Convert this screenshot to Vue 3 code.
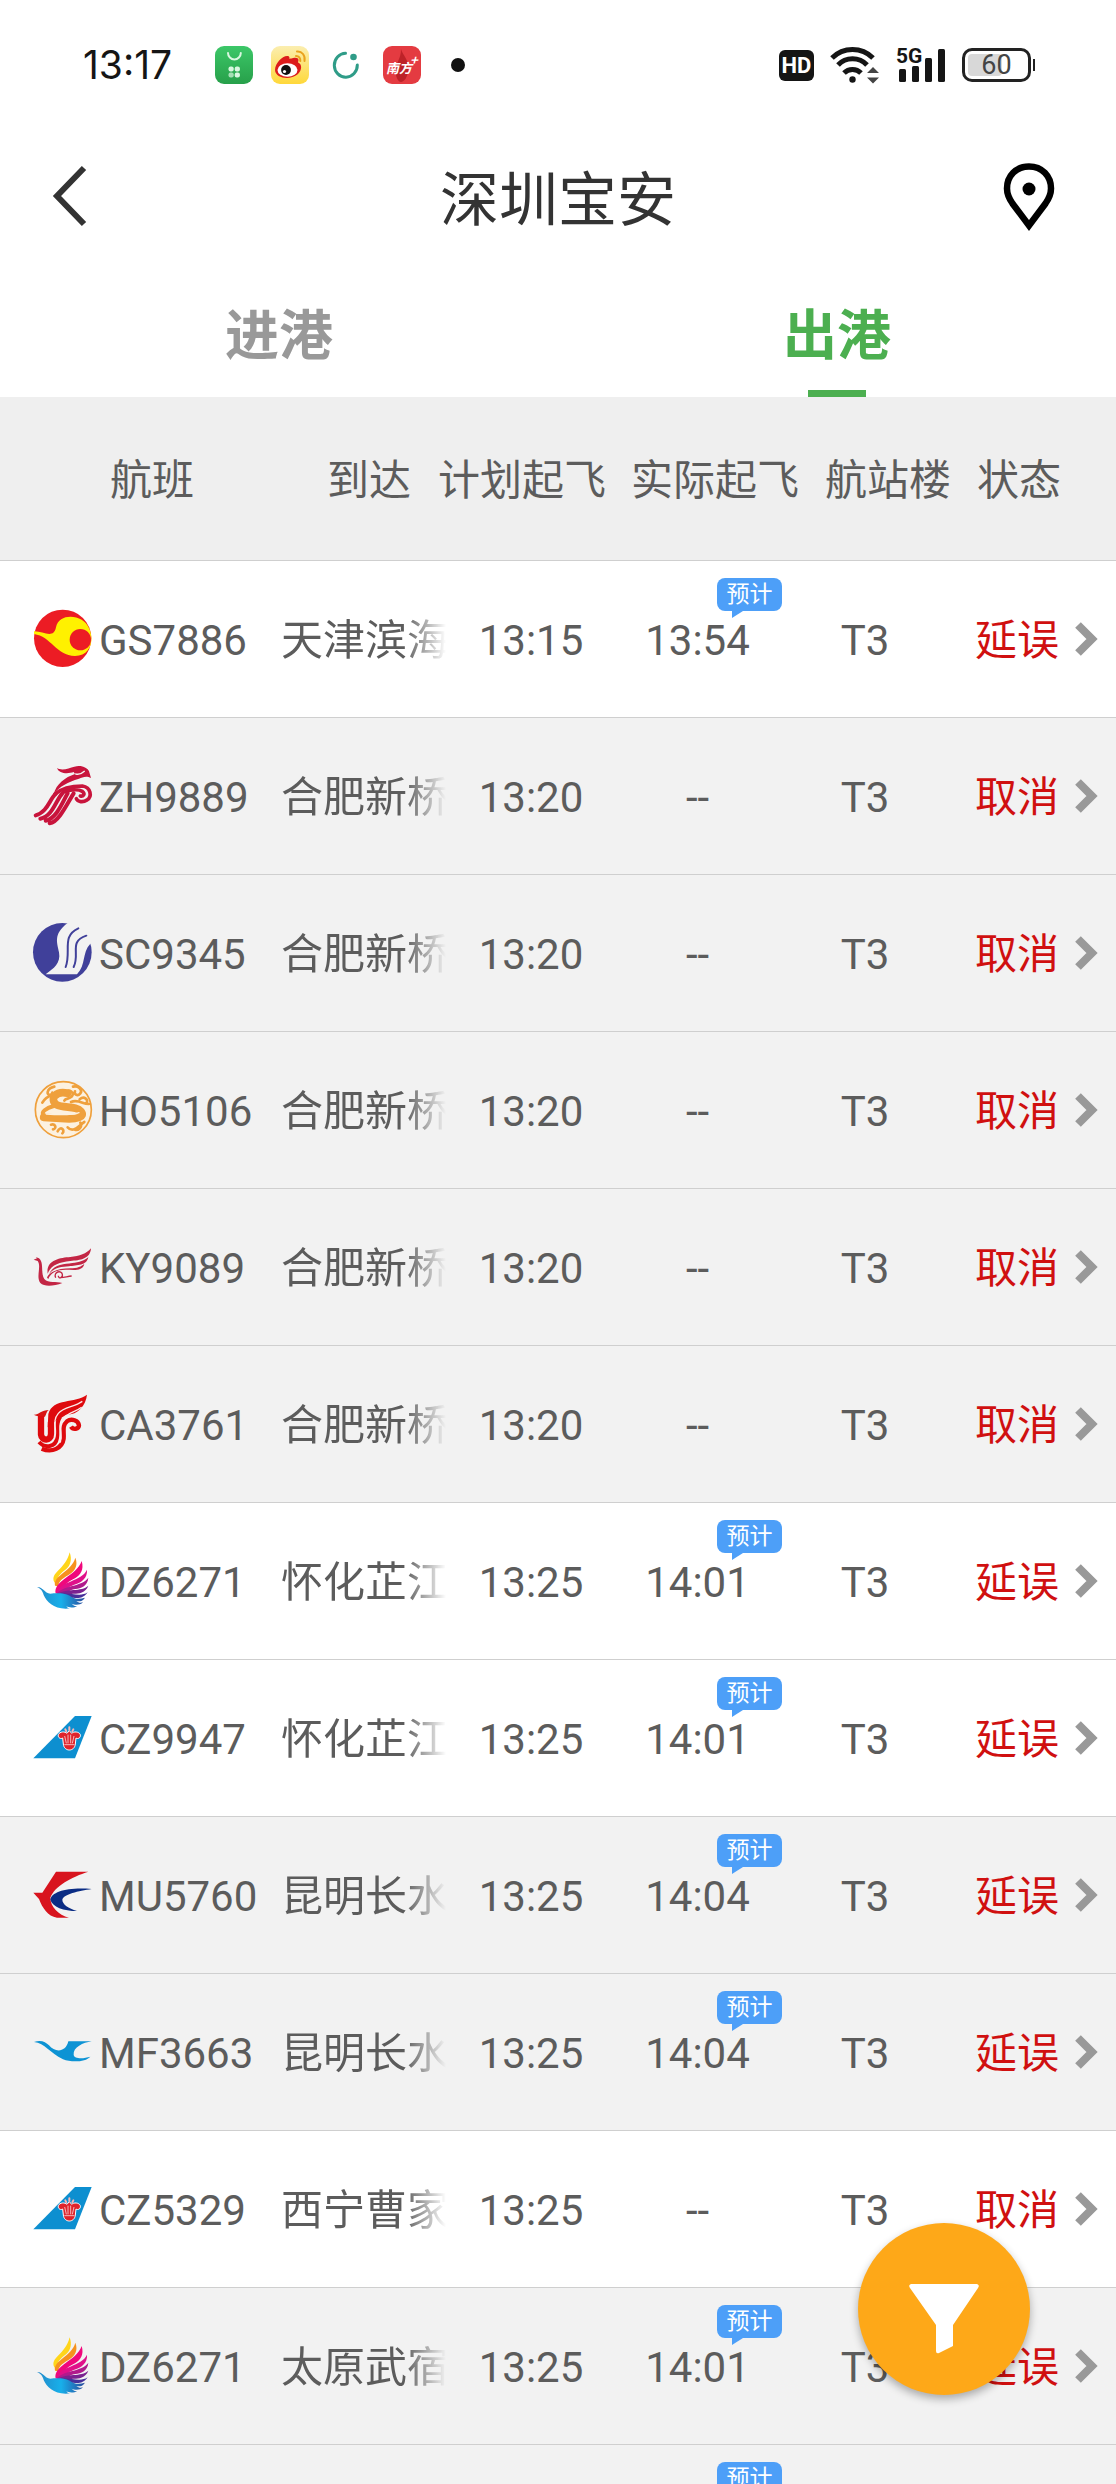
<script setup>
import { ref } from 'vue'

const tabs = ['进港', '出港']
const activeTab = ref('出港')
const columns = ['航班', '到达', '计划起飞', '实际起飞', '航站楼', '状态']

const flights = [
  { logo: 'tianjin', no: 'GS7886', city: '天津滨海', plan: '13:15', actual: '13:54', terminal: 'T3', status: '延误', estimated: true, shaded: false },
  { logo: 'shenzhen', no: 'ZH9889', city: '合肥新桥', plan: '13:20', actual: '--', terminal: 'T3', status: '取消', estimated: false, shaded: true },
  { logo: 'shandong', no: 'SC9345', city: '合肥新桥', plan: '13:20', actual: '--', terminal: 'T3', status: '取消', estimated: false, shaded: true },
  { logo: 'juneyao', no: 'HO5106', city: '合肥新桥', plan: '13:20', actual: '--', terminal: 'T3', status: '取消', estimated: false, shaded: true },
  { logo: 'kunming', no: 'KY9089', city: '合肥新桥', plan: '13:20', actual: '--', terminal: 'T3', status: '取消', estimated: false, shaded: true },
  { logo: 'airchina', no: 'CA3761', city: '合肥新桥', plan: '13:20', actual: '--', terminal: 'T3', status: '取消', estimated: false, shaded: true },
  { logo: 'donghai', no: 'DZ6271', city: '怀化芷江', plan: '13:25', actual: '14:01', terminal: 'T3', status: '延误', estimated: true, shaded: false },
  { logo: 'southern', no: 'CZ9947', city: '怀化芷江', plan: '13:25', actual: '14:01', terminal: 'T3', status: '延误', estimated: true, shaded: false },
  { logo: 'eastern', no: 'MU5760', city: '昆明长水', plan: '13:25', actual: '14:04', terminal: 'T3', status: '延误', estimated: true, shaded: true },
  { logo: 'xiamen', no: 'MF3663', city: '昆明长水', plan: '13:25', actual: '14:04', terminal: 'T3', status: '延误', estimated: true, shaded: true },
  { logo: 'southern', no: 'CZ5329', city: '西宁曹家', plan: '13:25', actual: '--', terminal: 'T3', status: '取消', estimated: false, shaded: false },
  { logo: 'donghai', no: 'DZ6271', city: '太原武宿', plan: '13:25', actual: '14:01', terminal: 'T3', status: '延误', estimated: true, shaded: true },
  { logo: '', no: '', city: '', plan: '', actual: '', terminal: '', status: '', estimated: true, shaded: true }
]
</script>

<template>
  <div class="screen">
    <header class="top">
      <div class="statusbar">
        <div class="side left">
          <span class="clock">13:17</span>
          <svg class="app" viewBox="0 0 38 38">
            <defs>
              <linearGradient id="market" x1="0" y1="0" x2="0" y2="1">
                <stop offset="0" stop-color="#3cc768" />
                <stop offset="1" stop-color="#27a04a" />
              </linearGradient>
            </defs>
            <rect width="38" height="38" rx="9" fill="url(#market)" />
            <path d="M13 7a6.400 6.400 0 0 0 12.800 0" fill="none" stroke="#d9f7e0" stroke-width="2" stroke-linecap="round" />
            <g fill="#d9f7e0">
              <rect x="13.500" y="20.500" width="5.200" height="5" rx="2" />
              <rect x="19.700" y="20.500" width="5.200" height="5" rx="2" />
              <rect x="13.500" y="26.500" width="5.200" height="5" rx="2" opacity=".7" />
              <rect x="19.700" y="26.500" width="5.200" height="5" rx="2" />
            </g>
          </svg>
          <svg class="app" viewBox="0 0 38 38">
            <defs>
              <linearGradient id="weibo" x1="0" y1="0" x2="0" y2="1">
                <stop offset="0" stop-color="#fbeeb0" />
                <stop offset="1" stop-color="#ffd83a" />
              </linearGradient>
            </defs>
            <rect width="38" height="38" rx="9" fill="url(#weibo)" />
            <path d="M4 24C4 17 12 9 17 10c2 .5 1.500 3 1.500 3s6-2.500 8.500-.5c1 1 0 4 0 4s4 1.500 3 6c-1 6-8 9.500-14 9.500S4 29 4 24z" fill="#dc1c1c" />
            <ellipse cx="16.500" cy="24" rx="10" ry="6.800" fill="#fff" />
            <circle cx="15" cy="24" r="4.900" fill="#111" />
            <circle cx="13.500" cy="25.500" r="1.600" fill="#fff" />
            <path d="M25 10c3 0 4.500 2 4.300 5M26 5.500c5-.5 8.500 4 7.500 9.500" fill="none" stroke="#eaa21e" stroke-width="2" stroke-linecap="round" />
          </svg>
          <svg class="app" viewBox="0 0 38 38">
            <path d="M18.500 7.200A11.500 12 0 1 0 30.300 19" fill="none" stroke="#2f9c88" stroke-width="3" stroke-linecap="round" />
            <circle cx="26.500" cy="11" r="3.300" fill="#2f9c88" />
          </svg>
          <svg class="app" viewBox="0 0 38 38">
            <rect width="38" height="38" rx="9" fill="#e43b41" />
            <path d="M18 3c2 7 8 10 7 21 0 7-4 12-7 12s-6-6-5-12c0-8 5-11 5-21z" fill="#bd2228" />
            <text x="3" y="27" class="press">南方</text>
            <text x="27" y="19" class="press">+</text>
          </svg>
          <span class="dot"></span>
        </div>
        <div class="side right">
          <span class="hd">HD</span>
          <svg class="wifi" viewBox="0 0 50 38">
            <g fill="none" stroke="#151515" stroke-width="5">
              <path d="M2 12a29 29 0 0 1 41 0" />
              <path d="M8 19a20 20 0 0 1 29 0" />
              <path d="M14 27a12 12 0 0 1 17 0" />
            </g>
            <circle cx="22.500" cy="33.500" r="3.200" fill="#151515" />
            <path d="M37 27l6-6 6 6zM37 31.500h12l-6 6z" fill="#444" />
          </svg>
          <svg class="signal" viewBox="0 0 50 38">
            <text x="0" y="17" class="five">5G</text>
            <g fill="#151515">
              <rect x="3" y="23" width="7" height="13" rx="1.500" />
              <rect x="16" y="20" width="7" height="16" rx="1.500" />
              <rect x="29" y="12" width="7" height="24" rx="1.500" />
              <rect x="42" y="3" width="7" height="33" rx="1.500" />
            </g>
          </svg>
          <span class="battery"><i class="charge"></i><b class="level">60</b></span>
        </div>
      </div>

      <div class="navbar">
        <button class="icon-btn" aria-label="返回">
          <svg width="40" height="64" viewBox="0 0 40 64">
            <path d="M36 4L9 32l27 28" fill="none" stroke="#333" stroke-width="6" />
          </svg>
        </button>
        <h1 class="title">深圳宝安</h1>
        <button class="icon-btn locate" aria-label="位置">
          <svg width="54" height="70" viewBox="0 0 54 70">
            <path d="M27 5.500C14 5.500 5 15 5 27.500c0 6 2 10 5.500 15L27 64.500l16.500-22C47 37.500 49 33.500 49 27.500 49 15 40 5.500 27 5.500z" fill="none" stroke="#000" stroke-width="6.500" />
            <circle cx="27" cy="28" r="6.500" fill="#000" />
          </svg>
        </button>
      </div>

      <nav class="tabs" role="tablist">
        <button
          v-for="tab in tabs"
          :key="tab"
          class="tab"
          role="tab"
          :class="{ active: tab === activeTab }"
          :aria-selected="tab === activeTab"
          @click="activeTab = tab"
        >{{ tab }}</button>
      </nav>
    </header>

    <main class="list">
      <table class="board">
        <thead>
          <tr>
            <th v-for="name in columns" :key="name" scope="col">{{ name }}</th>
          </tr>
        </thead>
        <tbody>
          <tr v-for="(f, i) in flights" :key="i" :class="{ shaded: f.shaded }">
            <td class="flight">
              <svg class="logo" viewBox="0 0 180 180" aria-hidden="true">
                <g v-if="f.logo === 'tianjin'">
                  <circle cx="89" cy="88" r="86" fill="#ec1c24" />
                  <path d="M3 67C30 66 62 92 69 55C76 20 118 16 146 32C166 44 174 66 175 84C178 114 160 141 126 141C70 140 54 82 3 75Z" fill="#fff100" />
                  <circle cx="142" cy="92" r="32" fill="#ec1c24" />
                </g>
                <g v-else-if="f.logo === 'shenzhen'" fill="none" stroke="#c8143c" stroke-linecap="round">
                  <path d="M72 6C88 16 108 6 124 2C146-4 164 6 168 16L174 36C160 28 148 34 138 38C104 48 82 60 62 84C70 54 96 34 126 24L122 18C106 24 78 24 72 6Z" fill="#c8143c" stroke="none" />
                  <path d="M128 24C138 26 148 22 154 16" stroke="#f2f2f2" stroke-width="4" />
                  <path d="M66 84C92 62 124 60 148 60C174 64 178 92 162 102C150 110 134 108 130 98M92 78C116 70 138 70 148 76C158 84 150 92 142 90" stroke-width="11" />
                  <path d="M68 84C50 98 44 138 8 148M88 82C68 104 58 152 22 158M104 82C88 110 70 158 38 164M122 82C104 110 78 168 50 172" stroke-width="12" />
                </g>
                <g v-else-if="f.logo === 'shandong'">
                  <circle cx="88" cy="88" r="88" fill="#40409a" />
                  <path d="M104 0C58 34 74 62 78 88C84 122 62 136 38 154L132 154C160 124 146 90 172 62L190 54L160 0L110-4Z" fill="#f2f2f2" />
                  <path d="M136 16C84 40 116 84 98 132M160 38C106 56 142 92 122 132" fill="none" stroke="#40409a" stroke-width="6" stroke-linecap="round" />
                </g>
                <g v-else-if="f.logo === 'juneyao'" fill="none" stroke="#efa03c" stroke-linecap="round">
                  <circle cx="91" cy="89" r="84" fill="#fcf1e0" stroke-width="5" />
                  <path d="M104 40C70 32 48 56 70 74C92 86 130 76 144 94C158 112 130 118 96 116L32 112" stroke-width="23" />
                  <path d="M62 78C40 84 22 96 32 106" stroke-width="12" />
                  <path d="M70 38C56 44 38 50 28 68M64 20C54 22 46 28 44 36C42 46 56 48 58 38M96 36C110 26 126 38 116 50C108 58 98 54 94 62M120 20C136 16 150 30 142 40C134 50 122 44 126 34M140 58C154 46 168 60 160 70M114 66C136 56 152 74 168 72M54 134C68 130 72 146 60 148M74 154C82 136 98 150 88 160M104 142C122 162 140 134 154 126M142 128C150 142 134 154 124 148" stroke-width="8" />
                  <path d="M40 102C88 106 120 104 138 98" stroke="#fcf1e0" stroke-width="4" />
                </g>
                <g v-else-if="f.logo === 'kunming'" fill="#c32645">
                  <path d="M2 68L12 64L8 60L18 64C34 78 22 108 34 126C46 140 70 132 88 138C62 148 34 150 22 138C8 120 26 88 14 72Z" />
                  <path d="M44 110C38 70 80 62 112 60C140 58 160 50 174 34C172 66 142 70 112 72C78 76 54 84 44 110Z" />
                  <path d="M48 112C60 82 92 82 118 78C138 76 156 70 166 60C162 86 132 84 108 88C84 90 62 92 48 112Z" />
                  <path d="M42 122C50 102 82 94 112 94C132 94 146 88 154 80C150 104 120 98 98 98C74 98 54 106 46 126Z" />
                  <path d="M68 122C60 104 86 98 88 112C90 124 76 126 76 116M82 122C96 122 102 118 116 117" fill="none" stroke="#c32645" stroke-width="4" />
                </g>
                <g v-else-if="f.logo === 'airchina'">
                  <path d="M2 62C16 64 24 48 48 48C40 52 40 62 36 68C20 68 12 66 2 62Z" fill="#d81414" />
                  <path d="M46 60C60 10 126 30 162 2C158 34 136 62 100 62L70 80L44 100Z" fill="#de0a0e" />
                  <g fill="none" stroke="#de0a0e">
                    <path d="M24 66V122C26 142 54 142 54 120V84" stroke-width="19" />
                    <path d="M18 144C36 164 68 160 72 132C76 106 66 90 82 68" stroke-width="12" />
                    <path d="M26 164C58 178 88 162 92 134C94 112 86 96 102 82C116 72 136 80 138 94C138 106 120 108 114 98" stroke-width="13" />
                  </g>
                  <path d="M64 136C76 108 54 84 76 58C94 38 122 40 148 22M82 146C90 116 72 96 92 72C108 54 128 54 146 40" fill="none" stroke="#fbe9e9" stroke-width="4" />
                </g>
                <g v-else-if="f.logo === 'donghai'">
                  <defs>
                    <linearGradient id="body" x1="0" y1="0" x2="1" y2="0">
                      <stop offset="0" stop-color="#2389c8" />
                      <stop offset=".5" stop-color="#18b0ea" />
                      <stop offset="1" stop-color="#2a4a9c" />
                    </linearGradient>
                  </defs>
                  <path d="M64 94C50 64 98 56 110 4C118 26 112 44 100 54C84 66 70 78 70 100Z" fill="#ffd51a" />
                  <path d="M66 104C60 72 116 62 127 20C136 42 126 58 112 68C94 80 76 88 76 106Z" fill="#f6921e" />
                  <path d="M68 128C60 88 130 76 146 30C154 56 142 72 126 82C106 92 92 100 90 124Z" fill="#f0087c" />
                  <path d="M70 126C80 90 146 92 162 56C164 82 144 94 128 100C110 106 98 114 94 126Z" fill="#e0108a" />
                  <path d="M70 130C86 102 148 108 166 80C164 106 142 112 128 114C112 116 104 122 100 132Z" fill="#b01a8c" />
                  <path d="M72 130C98 110 146 124 166 104C158 126 136 128 124 128C112 128 108 134 104 140Z" fill="#7a2290" />
                  <path d="M70 132C100 118 140 142 164 124C152 144 132 142 120 140L90 150Z" fill="#46309a" />
                  <path d="M12 108C28 106 34 126 52 128C72 126 94 126 110 134C122 144 138 146 156 140C148 152 138 152 130 150C136 156 144 156 150 154C140 164 124 162 116 158C122 166 130 166 134 164C122 172 108 170 100 166C104 172 108 172 112 172C66 178 42 154 32 132C28 118 22 112 12 108Z" fill="url(#body)" />
                </g>
                <g v-else-if="f.logo === 'southern'">
                  <path d="M1 151L126 24H176L126 151Z" fill="#0d8fd0" />
                  <path d="M76 80C80 70 96 70 102 76L109 68L116 76C122 70 138 70 142 80C144 90 134 94 129 90L127 108C125 132 93 132 91 108L89 90C84 94 74 90 76 80Z" fill="#e0242c" stroke="#fff" stroke-width="3" />
                  <path d="M95 84L100 106M105 80V106M113 80V106M123 84L118 106M94 110H124" fill="none" stroke="#fff" stroke-width="2" />
                  <path d="M97 64l3 6M109 58v8M121 64l-3 6" stroke="#f4b4b8" stroke-width="6" stroke-linecap="round" />
                </g>
                <g v-else-if="f.logo === 'eastern'">
                  <path d="M69 20H166C116 36 66 62 52 98C52 124 76 150 108 158H72C44 154 28 128 18 102L1 83H28Z" fill="#d8141e" />
                  <path d="M176 72C104 66 56 80 52 104C58 126 92 138 132 138C106 130 88 118 88 104C92 88 136 78 176 72Z" fill="#0a2c84" />
                </g>
                <path
                  v-else-if="f.logo === 'xiamen'"
                  d="M3 60C24 52 38 60 48 70C66 92 98 92 106 58H176C150 62 120 76 122 98C124 112 152 110 172 104C158 120 116 122 90 112C50 92 36 64 3 60Z"
                  fill="#0d93d4"
                />
              </svg>
              <span class="number">{{ f.no }}</span>
            </td>
            <td class="city">{{ f.city }}</td>
            <td class="mid">{{ f.plan }}</td>
            <td class="mid actual">
              {{ f.actual }}
              <span v-if="f.estimated" class="badge">预计</span>
            </td>
            <td class="mid">{{ f.terminal }}</td>
            <td class="state">{{ f.status }}</td>
            <td class="more">
              <svg width="24" height="34" viewBox="0 0 24 34" aria-hidden="true">
                <path d="M3 3l14 14L3 31" fill="none" stroke="#999" stroke-width="8" />
              </svg>
            </td>
          </tr>
        </tbody>
      </table>
    </main>

    <button class="fab" aria-label="筛选">
      <svg width="70" height="70" viewBox="0 0 70 70">
        <path d="M2 0H68Q71 1 69 4L44 41V62L30 69Q27 70 27 67V41L1 4Q-1 1 2 0Z" fill="#fff" />
      </svg>
    </button>
  </div>
</template>

<style>
body {
  margin: 0;
}
</style>

<style scoped>
.screen {
  height: 100vh;
  display: flex;
  flex-direction: column;
  overflow: hidden;
  background: #fff;
  color: #5c5c5c;
  font-family: Roboto, "Noto Sans CJK SC", sans-serif;
}

button {
  border: 0;
  padding: 0;
  background: none;
  font-family: inherit;
  color: inherit;
  cursor: pointer;
}

svg {
  display: block;
  overflow: visible;
}

.top {
  flex: none;
}

.statusbar {
  display: flex;
  justify-content: space-between;
  align-items: center;
  height: 130px;
  padding: 0 85px 0 83px;
}

.side {
  display: flex;
  align-items: center;
}

.left {
  gap: 18px;
}

.clock {
  width: 114px;
  font: 400 39px/48px Inter, sans-serif;
  color: #151515;
}

.app {
  width: 38px;
  height: 38px;
}

.press {
  font: italic 700 13px "Noto Sans CJK SC", sans-serif;
  fill: #fff;
}

.dot {
  width: 14px;
  height: 14px;
  margin-left: 12px;
  border-radius: 50%;
  background: #111;
}

.right {
  gap: 16px;
}

.hd {
  width: 35px;
  height: 31px;
  border-radius: 6px;
  background: #151515;
  color: #fff;
  font: 700 22px/31px Roboto, sans-serif;
  text-align: center;
}

.wifi,
.signal {
  width: 50px;
  height: 38px;
}

.five {
  font: 700 21px Roboto, sans-serif;
  fill: #151515;
}

.battery {
  position: relative;
  box-sizing: border-box;
  width: 69px;
  height: 34px;
  padding: 3px;
  border: 3px solid #222;
  border-radius: 10px;
}

.battery::after {
  content: "";
  position: absolute;
  right: -7px;
  top: 8px;
  width: 2px;
  height: 12px;
  background: #222;
}

.charge {
  display: block;
  width: 60%;
  height: 22px;
  border-radius: 4px;
  background: #d8d8d8;
}

.level {
  position: absolute;
  inset: 0;
  font: 400 27px/28px Roboto, sans-serif;
  text-align: center;
  color: #444;
}

.navbar {
  display: grid;
  grid-template-columns: 1fr auto 1fr;
  align-items: center;
  height: 132px;
  padding: 0 48px;
}

.icon-btn {
  justify-self: start;
}

.locate {
  justify-self: end;
  padding-right: 12px;
}

.title {
  margin: 0;
  padding-top: 10px;
  font-size: 59px;
  line-height: 80px;
  font-weight: 400;
  color: #333;
}

.tabs {
  display: flex;
  height: 135px;
}

.tab {
  position: relative;
  flex: 1;
  padding-top: 14px;
  font-size: 54px;
  font-weight: 700;
  line-height: 80px;
  color: #999;
}

.active {
  color: #4caf50;
}

.active::after {
  content: "";
  position: absolute;
  left: 50%;
  bottom: 0;
  width: 58px;
  height: 7px;
  margin-left: -29px;
  background: #4caf50;
}

.list {
  flex: 1;
  min-height: 0;
  overflow-y: auto;
  scrollbar-width: none;
}

.board,
.board thead,
.board tbody {
  display: block;
  font-size: 42px;
  line-height: 60px;
}

.board tr {
  display: grid;
  align-items: center;
  box-sizing: border-box;
  height: 157px;
  border-bottom: 1px solid #cfcfcf;
}

.board thead tr {
  height: 164px;
  grid-template-columns: 316fr 106fr 200fr 186fr 160fr 102fr 46fr;
  background: #efefef;
}

.board tbody tr {
  grid-template-columns: 281fr 165fr 170fr 163fr 172fr 124fr 41fr;
}

.shaded {
  background: #f2f2f2;
}

th,
td {
  padding: 4px 0 0;
  white-space: nowrap;
}

th {
  font-weight: 400;
  text-align: center;
}

th:first-child {
  padding-right: 12px;
}

.flight {
  display: flex;
  align-items: center;
  gap: 6px;
  padding: 0 0 0 33px;
}

.number {
  padding-top: 4px;
}

.logo {
  flex: none;
  width: 60px;
  height: 60px;
}

.city {
  overflow: hidden;
  mask-image: linear-gradient(to right, #000 75%, transparent);
}

.mid {
  text-align: center;
}

.actual {
  position: relative;
  display: flex;
  align-items: center;
  align-self: stretch;
  justify-content: center;
}

.badge {
  position: absolute;
  left: 62%;
  top: 17px;
  width: 65px;
  border-radius: 8px;
  background: #4d9ff8;
  color: #fff;
  font-size: 23px;
  line-height: 33px;
}

.badge::after {
  content: "";
  position: absolute;
  left: 15px;
  top: 100%;
  border-top: 7px solid #4d9ff8;
  border-right: 11px solid transparent;
}

.state {
  padding-left: 24px;
  color: #d01010;
}

.more {
  padding: 0;
}

.fab {
  position: fixed;
  right: 86px;
  bottom: 89px;
  display: flex;
  align-items: center;
  justify-content: center;
  width: 172px;
  height: 172px;
  padding-top: 20px;
  border-radius: 50%;
  background: #fea818;
  box-shadow: 0 4px 8px rgba(0, 0, 0, 0.3);
}
</style>
